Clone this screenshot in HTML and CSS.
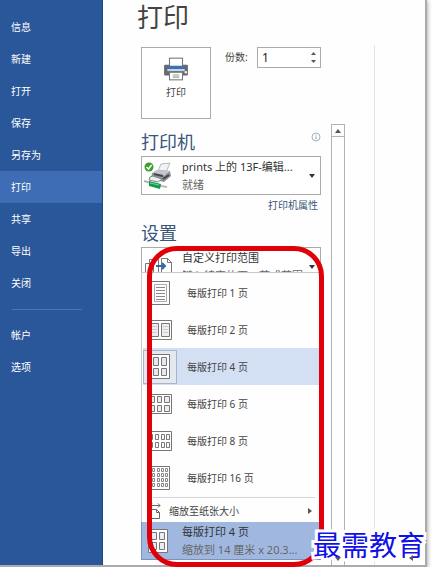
FILE: index.html
```html
<!DOCTYPE html>
<html lang="zh-CN">
<head>
    <meta charset="UTF-8">
    <meta name="viewport" content="width=device-width, initial-scale=1.0">
    <title>打印</title>
    <link rel="stylesheet" href="styles.css">
</head>
<body>
    <div class="window">
        <nav class="sidebar">
            <a href="#info">信息</a>
            <a href="#new">新建</a>
            <a href="#open">打开</a>
            <a href="#save">保存</a>
            <a href="#saveas">另存为</a>
            <a href="#print" class="active">打印</a>
            <a href="#share">共享</a>
            <a href="#export">导出</a>
            <a href="#close">关闭</a>
            <hr>
            <a href="#account">帐户</a>
            <a href="#options">选项</a>
        </nav>

        <main class="backstage">
            <h1>打印</h1>
            <div class="print-row">
                <button type="button" class="print-button">
                    <svg width="26" height="24" viewBox="0 0 24 22">
                        <rect x="1" y="7" width="22" height="10" rx="1" fill="#66696d"/>
                        <rect x="6" y="1" width="12" height="9" fill="#fff" stroke="#777"/>
                        <rect x="4" y="8" width="16" height="3" fill="#3d72b0"/>
                        <rect x="4" y="11" width="16" height="2" fill="#c9d5e2"/>
                        <rect x="20" y="13" width="2" height="2" fill="#fff"/>
                        <rect x="6" y="14" width="12" height="7" fill="#fff" stroke="#777"/>
                        <path d="M9 16.500h6M9 18.500h6" stroke="#999"/>
                    </svg>
                    <span>打印</span>
                </button>
                <label for="copies">份数:</label>
                <div class="spinner">
                    <input type="text" id="copies" value="1">
                    <div class="spinner-buttons">
                        <button type="button" aria-label="增加"><svg width="5" height="3"><path d="M0 3L2.500 0L5 3z" fill="#555"/></svg></button>
                        <button type="button" aria-label="减少"><svg width="5" height="3"><path d="M0 0h5L2.500 3z" fill="#555"/></svg></button>
                    </div>
                </div>
            </div>

            <div class="scroll-area">
                <div class="settings">
                    <div class="heading">
                        <h2>打印机</h2>
                        <svg width="10" height="10" viewBox="0 0 10 10">
                            <circle cx="5" cy="5" r="4" fill="none" stroke="#a3b1c0"/>
                            <path d="M5 4.500v3M5 2.500v1" stroke="#8d9fb2"/>
                        </svg>
                    </div>
                    <div class="dropdown">
                        <svg class="icon-printer" width="28" height="28" viewBox="0 0 28 28">
                            <path d="M14 9l3-7 9-1-4 9z" fill="#f2f3f4" stroke="#b5b9bd"/>
                            <path d="M8 11l5-3 13 1 1 5-7 6-13-3z" fill="#8b9096"/>
                            <path d="M8 11l5-3 13 1-6 5z" fill="#c3c7cb"/>
                            <path d="M10 12l9 2M19 17l6-4" stroke="#44484d" stroke-width="2"/>
                            <path d="M6 15l3-1 9 3-4 3-9-2z" fill="#eceeef" stroke="#81868b"/>
                            <path d="M0 19l17 5" stroke="#afb4b8" stroke-width="2"/>
                            <path d="M5 19l12 3-1 5-11-3z" fill="#159a4c"/>
                            <path d="M6 21l9 2" stroke="#72d796" stroke-width="1"/>
                            <path d="M17 24l6 1" stroke="#b8bdc1" stroke-width="2"/>
                            <circle cx="5" cy="5" r="4.500" fill="#3a9f2c"/>
                            <path d="M2.500 5l2 2 3-4" fill="none" stroke="#fff" stroke-width="1.500"/>
                        </svg>
                        <div class="dropdown-text">
                            <select aria-label="打印机">
                                <option>prints 上的 13F-编辑...</option>
                            </select>
                            <span>就绪</span>
                        </div>
                        <svg class="caret" width="6" height="4"><path d="M0 0h6L3 4z" fill="#333"/></svg>
                    </div>
                    <a href="#properties" class="properties">打印机属性</a>

                    <div class="heading">
                        <h2>设置</h2>
                    </div>
                    <div class="page-setup">
                        <div class="dropdown">
                            <svg width="28" height="28" viewBox="0 0 28 28" fill="#fff" stroke="#777">
                                <path d="M1.500 10.500h8v13h-8zM5.500 6.500h9v15h-9z"/>
                                <path d="M17.500 5.500h6l4 4v14h-10z"/>
                                <path d="M23.500 5.500v4h4" fill="none"/>
                                <path d="M12 13h9M18 10l3 3-3 3" fill="none" stroke="#2b6ca8" stroke-width="2"/>
                            </svg>
                            <div class="dropdown-text">
                                <select aria-label="打印范围">
                                    <option>自定义打印范围</option>
                                </select>
                                <span>键入特定的页、节或范围</span>
                            </div>
                            <svg class="caret" width="6" height="4"><path d="M0 0h6L3 4z" fill="#333"/></svg>
                        </div>

                        <div class="dropdown layout">
                            <svg width="28" height="28" viewBox="0 0 28 28" fill="#e9edf3" stroke="#777">
                                <path d="M4.500 2.500h19v23h-19z" fill="#fff"/>
                                <path d="M7.500 5.500h5v7h-5zM15.500 5.500h5v7h-5zM7.500 15.500h5v7h-5zM15.500 15.500h5v7h-5z"/>
                            </svg>
                            <div class="dropdown-text">
                                <select aria-label="每版打印页数">
                                    <option>每版打印 4 页</option>
                                </select>
                                <span>缩放到 14 厘米 x 20.3...</span>
                            </div>

                            <div class="menu">
                                <button type="button" class="menu-item">
                                    <svg width="34" height="34" viewBox="0 0 34 34" fill="#fff" stroke="#777">
                                        <path d="M8.500 5.500h18v23h-18z"/>
                                        <path d="M11.500 8.500h12v17h-12z" stroke="#aaa"/>
                                        <path d="M13 11.500h9M13 14.500h9M13 17.500h9M13 20.500h9M13 23.500h9" stroke="#888"/>
                                    </svg>
                                    每版打印 1 页
                                </button>
                                <button type="button" class="menu-item">
                                    <svg width="34" height="34" viewBox="0 0 34 34" fill="#fff" stroke="#777">
                                        <path d="M5.500 7.500h23v19h-23z"/>
                                        <path d="M7.500 10.500h8v13h-8zM18.500 10.500h8v13h-8z" fill="#eee"/>
                                        <path d="M9 13.500h5M9 16.500h5M9 19.500h5M20 13.500h5M20 16.500h5M20 19.500h5" stroke="#ccc"/>
                                    </svg>
                                    每版打印 2 页
                                </button>
                                <button type="button" class="menu-item selected">
                                    <svg width="34" height="34" viewBox="0 0 34 34" fill="#e6e8eb" stroke="#777">
                                        <path d="M7.500 4.500h19v24h-19z" fill="#fff"/>
                                        <path d="M10.500 7.500h5v8h-5zM18.500 7.500h5v8h-5zM10.500 18.500h5v7h-5zM18.500 18.500h5v7h-5z"/>
                                    </svg>
                                    每版打印 4 页
                                </button>
                                <button type="button" class="menu-item">
                                    <svg width="34" height="34" viewBox="0 0 34 34" fill="#eee" stroke="#777">
                                        <path d="M5.500 7.500h23v19h-23z" fill="#fff"/>
                                        <path d="M7.500 9.500h4v6h-4zM14.500 9.500h4v6h-4zM21.500 9.500h5v6h-5zM7.500 18.500h4v6h-4zM14.500 18.500h4v6h-4zM21.500 18.500h5v6h-5z"/>
                                    </svg>
                                    每版打印 6 页
                                </button>
                                <button type="button" class="menu-item">
                                    <svg width="34" height="34" viewBox="0 0 34 34" fill="#fff" stroke="#777">
                                        <path d="M4.500 7.500h24v19h-24z"/>
                                        <path d="M6.500 10.500h3v5h-3zM12.500 10.500h3v5h-3zM18.500 10.500h3v5h-3zM23.500 10.500h3v5h-3zM6.500 18.500h3v5h-3zM12.500 18.500h3v5h-3zM18.500 18.500h3v5h-3zM23.500 18.500h3v5h-3z"/>
                                    </svg>
                                    每版打印 8 页
                                </button>
                                <button type="button" class="menu-item">
                                    <svg width="34" height="34" viewBox="0 0 34 34" fill="#fff" stroke="#888">
                                        <path d="M7.500 5.500h19v23h-19z" stroke="#777"/>
                                        <path d="M9.500 7.500h2v3h-2zM14.500 7.500h2v3h-2zM18.500 7.500h2v3h-2zM22.500 7.500h2v3h-2zM9.500 12.500h2v3h-2zM14.500 12.500h2v3h-2zM18.500 12.500h2v3h-2zM22.500 12.500h2v3h-2zM9.500 17.500h2v3h-2zM14.500 17.500h2v3h-2zM18.500 17.500h2v3h-2zM22.500 17.500h2v3h-2zM9.500 22.500h2v3h-2zM14.500 22.500h2v3h-2zM18.500 22.500h2v3h-2zM22.500 22.500h2v3h-2z"/>
                                    </svg>
                                    每版打印 16 页
                                </button>
                                <hr>
                                <button type="button" class="menu-item scale">
                                    <svg width="16" height="16" viewBox="0 0 16 16" fill="none" stroke="#666">
                                        <path d="M5.500 6.500h6l3 3v6h-9zM11.500 6.500v3h3M5 2.500h10M7 .500l-2 2 2 2M13 .500l2 2-2 2"/>
                                    </svg>
                                    <span>缩放至纸张大小</span>
                                    <svg width="4" height="6"><path d="M0 0l4 3-4 3z" fill="#555"/></svg>
                                </button>
                            </div>
                        </div>
                        <div class="ring"></div>
                    </div>
                </div>

                <div class="scrollbar">
                    <button type="button" aria-label="向上滚动"><svg width="6" height="4"><path d="M0 4L3 0L6 4z" fill="#555"/></svg></button>
                    <button type="button" aria-label="向下滚动"><svg width="6" height="4"><path d="M0 0h6L3 4z" fill="#555"/></svg></button>
                </div>
            </div>
        </main>

        <aside class="preview">
            <button type="button" aria-label="向左滚动"><svg width="4" height="6"><path d="M4 0L0 3l4 3z" fill="#555"/></svg></button>
        </aside>
        <div class="watermark">最需教育</div>
    </div>
</body>
</html>
```
FILE: styles.css
```css
* {
    box-sizing: border-box;
}
body {
    margin: 0;
    background: #fff;
    color: #444;
    font-family: "Noto Sans", "Noto Sans CJK SC", sans-serif;
    font-size: 10px;
}
button, input, select {
    font: inherit;
    color: inherit;
    background: none;
    border: none;
    padding: 0;
    margin: 0;
}
svg {
    display: block;
    flex: none;
}
.window {
    position: relative;
    display: flex;
    height: calc(100vh - 8px);
    margin-right: 6px;
    background: #fefefe;
    border-right: 2px solid #a9abae;
    border-bottom: 2px solid #a9abae;
    box-shadow: 1px 1px 4px rgba(0, 0, 0, 0.3);
}

/* left navigation */
.sidebar {
    flex: none;
    width: 103px;
    padding-top: 11px;
    background: #2a579a;
    border-right: 1px solid #21467e;
}
.sidebar a {
    display: block;
    height: 32px;
    padding-left: 11px;
    line-height: 32px;
    color: #fff;
    text-decoration: none;
}
.sidebar a.active {
    background: #3e6db5;
}
.sidebar hr {
    height: 1px;
    margin: 10px 20px 9px 12px;
    border: none;
    background: #4a74b4;
}

/* print settings */
.backstage {
    flex: 1;
    min-width: 0;
    display: flex;
    flex-direction: column;
    padding: 2px 0 0 38px;
}
h1 {
    margin: 0 0 15px -4px;
    font-size: 26px;
    line-height: 30px;
    font-weight: 400;
}
.print-row {
    display: flex;
    align-items: flex-start;
    margin: 0 24px 5px 0;
}
.print-button {
    display: flex;
    flex-direction: column;
    align-items: center;
    gap: 3px;
    width: 70px;
    height: 72px;
    padding-top: 9px;
    border: 1px solid #aaa;
    background: #fff;
}
.print-row label {
    margin-left: 14px;
    line-height: 20px;
}
.spinner {
    display: flex;
    width: 64px;
    height: 21px;
    margin-left: auto;
    border: 1px solid #aaa;
    background: #fff;
}
.spinner input {
    flex: 1;
    min-width: 0;
    padding-left: 4px;
    font-size: 12px;
    color: #222;
}
.spinner-buttons {
    display: flex;
    flex-direction: column;
    justify-content: space-evenly;
    padding-right: 4px;
}
.spinner-buttons button {
    padding: 2px 0;
}
.scroll-area {
    flex: 1;
    display: flex;
    gap: 10px;
}
.settings {
    flex: 1;
    min-width: 0;
    display: flex;
    flex-direction: column;
    padding: 6px 0 5px;
}
.heading {
    display: flex;
    justify-content: space-between;
    margin-bottom: 2px;
}
h2 {
    margin: 0;
    font-size: 18px;
    line-height: 24px;
    font-weight: 400;
    color: #3b5679;
}
.heading svg {
    margin-top: 2px;
}
.dropdown {
    display: flex;
    align-items: center;
    gap: 10px;
    height: 39px;
    padding: 0 5px 0 2px;
    border: 1px solid #aaa;
    background: #fff;
    font-size: 11px;
}
.dropdown-text {
    flex: 1;
    min-width: 0;
    display: flex;
    flex-direction: column;
}
.dropdown-text select {
    appearance: none;
    width: 100%;
    height: 18px;
    color: #333;
}
.dropdown-text span {
    line-height: 18px;
    white-space: nowrap;
    color: #666;
}
.properties {
    align-self: flex-end;
    margin: 0 3px 6px 0;
    line-height: 20px;
    color: #3b5679;
    text-decoration: none;
}
.page-setup {
    position: relative;
    flex: 1;
    display: flex;
    flex-direction: column;
    justify-content: space-between;
}
.layout {
    position: relative;
    background: #a0b8e0;
    border-color: #7c93b8;
}

/* opens upwards from the pages-per-sheet box */
.menu {
    position: absolute;
    left: -1px;
    right: 0;
    bottom: 100%;
    padding: 1px 0 0 1px;
    background: #fefefe;
    border: 1px solid #c6c9ce;
    border-bottom: none;
    font-size: 10px;
}
.menu-item {
    display: flex;
    align-items: center;
    gap: 10px;
    width: 100%;
    height: 37px;
    text-align: left;
}
.menu-item.selected {
    background: #d3e0f3;
}
.menu-item.selected svg {
    background: #e4e9f1;
    outline: 1px solid #a9b6ca;
    outline-offset: -1px;
}
.menu hr {
    height: 1px;
    margin: 1px 4px 1px 10px;
    border: none;
    background: #d5d5d5;
}
.menu-item.scale {
    gap: 8px;
    height: 23px;
    padding: 0 7px 0 2px;
}
.scale span {
    flex: 1;
}
.ring {
    position: absolute;
    top: -1px;
    right: -3px;
    bottom: -7px;
    left: 6px;
    border: 5px solid #e00008;
    border-radius: 30px;
    pointer-events: none;
}
.scrollbar {
    flex: none;
    width: 14px;
    display: flex;
    flex-direction: column;
    justify-content: space-between;
    border: 1px solid #b0b3b8;
    border-bottom: none;
}
.scrollbar button {
    position: relative;
    z-index: 1;
    display: flex;
    align-items: center;
    justify-content: center;
    height: 12px;
}
.scrollbar button:first-child {
    border-bottom: 1px solid #b0b3b8;
}

/* preview pane */
.preview {
    flex: none;
    display: flex;
    align-items: flex-end;
    justify-content: flex-end;
    width: 51px;
    margin: 45px 0 0 29px;
    padding: 0 12px 4px 0;
    border-left: 1px solid #e1e5e8;
}
.preview button {
    position: relative;
    z-index: 1;
}
.watermark {
    position: absolute;
    right: 0;
    bottom: 1px;
    font-family: "AR PL UKai CN", KaiTi, "Noto Sans CJK SC", serif;
    font-size: 28px;
    line-height: 40px;
    color: #1010e8;
    -webkit-text-stroke: 6px #fff;
    paint-order: stroke fill;
}
```
